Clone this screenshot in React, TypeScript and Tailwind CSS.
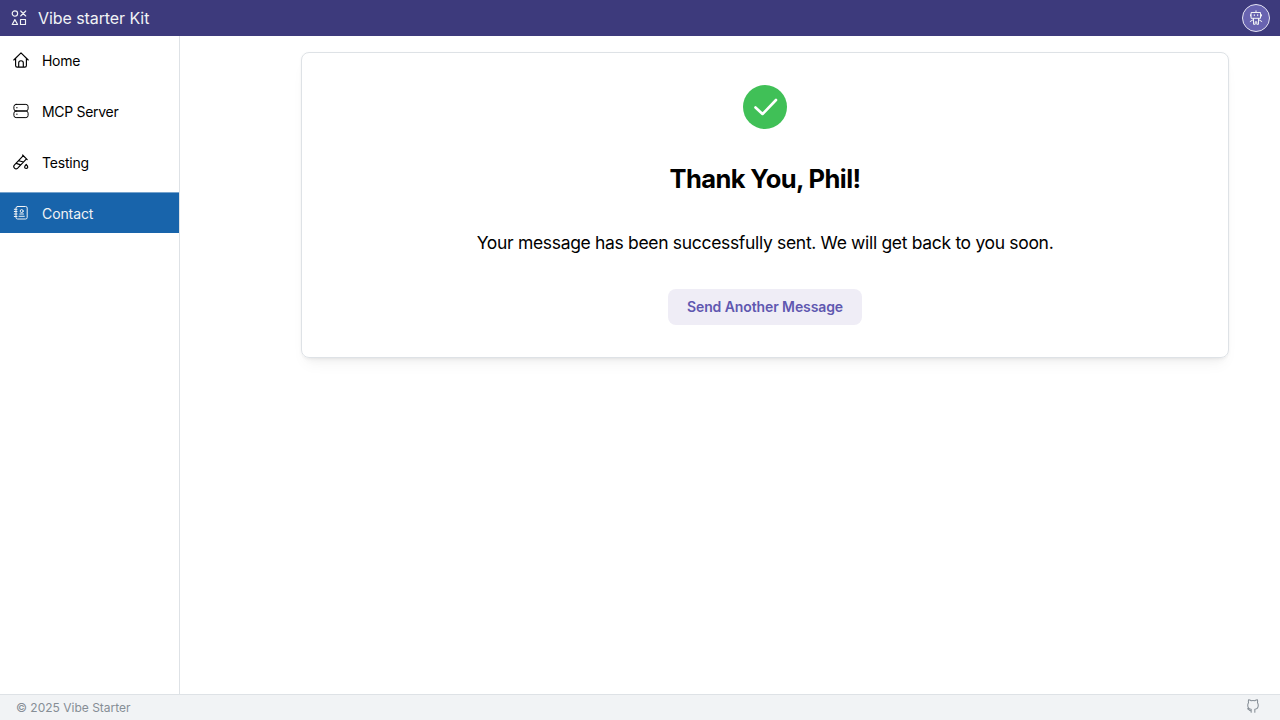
import type { ReactNode } from "react";

function Icon({ children, className = "size-4" }: { children: ReactNode; className?: string }) {
  return (
    <svg
      viewBox="0 0 16 16"
      className={className}
      fill="none"
      stroke="currentColor"
      strokeWidth="1"
      strokeLinecap="round"
      strokeLinejoin="round"
      aria-hidden="true"
    >
      {children}
    </svg>
  );
}

const ShapesIcon = () => (
  <Icon>
    <g strokeWidth="1.15">
      <circle cx="3.9" cy="3.5" r="2.7" />
      <path d="M9.700 1l5 5M14.700 1l-5 5M3.900 9.600L1.200 14.500h5.400zM9.500 9.500h5v5h-5z" />
    </g>
  </Icon>
);

const HomeIcon = () => (
  <Icon>
    <path
      d="M0.800 8L8 0.900 15.200 8M2.600 6.400v7.100c0 .9.7 1.600 1.600 1.600h7.600c.9 0 1.600-.7 1.600-1.600V6.400M5.700 15v-4.200C5.700 8 10.300 8 10.300 10.800V15"
      strokeWidth="1.15"
    />
  </Icon>
);

const ServerIcon = () => (
  <Icon>
    <rect x="0.900" y="1.400" width="14.200" height="6.600" rx="2.200" />
    <rect x="0.900" y="8" width="14.200" height="6.600" rx="2.200" />
    <path d="M3.900 4.400v.5M3.900 11v.5" />
  </Icon>
);

const TestTubeIcon = () => (
  <Icon>
    <path
      d="M9.600 1l4.600 4.600M10.300 1.700L1.500 10.900c-2.100 2.300 1 5.400 3.200 3.200L13.500 4.900M5.800 6.800l4.700 1.200M3.300 9.400l4.300 1.500"
      strokeWidth="1.15"
    />
    <path d="M13.200 10.400c-2.200 2.400-2 4 0 4s2.200-1.600 0-4z" strokeWidth="1.15" />
  </Icon>
);

const ContactIcon = () => (
  <Icon>
    <rect x="3" y="1.500" width="11.200" height="12.500" rx="1.600" />
    <path d="M1.300 4.300h2.700M1.300 6.500h2.700M1.300 9h2.700M1.300 11.500h2.700M6 11.300h5.300M6.800 9h3.700" />
    <circle cx="8.700" cy="6.100" r="1.500" />
  </Icon>
);

const RobotIcon = () => (
  <Icon>
    <path d="M8 2.500V0.800M3.500 2.500h9v5.800h-9zM6.300 4.700v1M9.700 4.700v1M2.500 4.700v1.300M13.500 4.700v1.300M5.500 8.500v5.800h1.700v-2.500h1.600v2.500h1.700V8.500M5 9.800l-2.800 1.700M11 9.800l2.800 1.700" />
  </Icon>
);

const GithubIcon = () => (
  <Icon className="size-3.5">
    <path d="M5.900 15.200v-3.400C3.500 11.500 2 10.100 2 7.200c0-1.200.3-2.100.9-2.900-.4-1.300-.2-2.500.1-3.500 1.400.1 2.300.7 3.100 1.200 1.300-.3 2.500-.3 3.800 0 .8-.5 1.700-1.100 3.100-1.200.3 1 .5 2.200.1 3.500.6.8.9 1.700.9 2.900 0 2.900-1.500 4.300-3.900 4.600v3.400M5.900 13.300c-2.200.5-2.600-1.800-4.200-2.200" strokeWidth="1.2" />
  </Icon>
);

const navItems = [
  { label: "Home", icon: <HomeIcon />, active: false, tracking: "tracking-[-0.3px]" },
  { label: "MCP Server", icon: <ServerIcon />, active: false, tracking: "tracking-[-0.3px]" },
  { label: "Testing", icon: <TestTubeIcon />, active: false, tracking: "tracking-[-0.2px]" },
  { label: "Contact", icon: <ContactIcon />, active: true, tracking: "tracking-[-0.1px]" },
];

export default function App() {
  return (
    <div className="flex h-screen flex-col overflow-hidden bg-white font-['Inter',sans-serif] text-black">
      <header className="flex h-9 shrink-0 items-center justify-between bg-[#3d3a7c] pr-2.5 pl-[11px] text-[#f1f3f5]">
        <div className="flex items-center gap-[11px]">
          <ShapesIcon />
          <span className="text-base leading-6 tracking-[-0.08px]">Vibe starter Kit</span>
        </div>
        <button
          aria-label="Account"
          className="flex size-7 items-center justify-center rounded-full border border-[#e5e4f2] bg-[#6863b0] text-[#f1f3f5]"
        >
          <RobotIcon />
        </button>
      </header>

      <div className="flex min-h-0 flex-1">
        <nav className="flex w-[180px] shrink-0 flex-col gap-2.5 border-r border-[#dee2e6] pt-[3px]">
          {navItems.map((item) => (
            <a
              key={item.label}
              href="#"
              className={`flex h-[41px] shrink-0 items-center gap-[13px] pt-0.5 pl-[13px] text-sm leading-5 ${
                item.active ? "border-t border-[#76a3cd] bg-[#1864ab] text-[#f1f3f5]" : ""
              }`}
            >
              <span className="pb-0.5">{item.icon}</span>
              <span className={item.tracking}>{item.label}</span>
            </a>
          ))}
        </nav>

        <main className="flex-1 pt-4 pr-[51px] pl-[121px]">
          <section className="flex h-[306px] flex-col items-center rounded-lg border border-[#dee2e6] pt-8 shadow-[0_1px_3px_rgba(0,0,0,0.05),0_10px_15px_-5px_rgba(0,0,0,0.05),0_7px_7px_-5px_rgba(0,0,0,0.04)]">
            <div className="flex size-11 items-center justify-center rounded-full bg-[#40c057]">
              <svg
                viewBox="0 0 26 26"
                className="size-[26px]"
                fill="none"
                stroke="white"
                strokeWidth="2.6"
                strokeLinecap="round"
                strokeLinejoin="round"
                aria-hidden="true"
              >
                <path d="M3.500 13.500l7 6.500L24 6" />
              </svg>
            </div>
            <h1 className="mt-8 text-[25.5px] leading-[35px] font-bold tracking-[-0.58px]">Thank You, Phil!</h1>
            <p className="mt-8 text-[17.5px] leading-[29px] tracking-[-0.322px]">
              Your message has been successfully sent. We will get back to you soon.
            </p>
            <button className="mt-8 h-9 w-[194px] rounded-lg bg-[#efedf6] text-sm font-semibold tracking-[-0.1px] text-[#5f58b0]">
              Send Another Message
            </button>
          </section>
        </main>
      </div>

      <footer className="flex h-[26px] shrink-0 items-center justify-between border-t border-[#dee2e6] bg-[#f1f3f5] pr-5 pl-4 text-[#868e96]">
        <span className="text-xs leading-4">© 2025 Vibe Starter</span>
        <a href="#" aria-label="GitHub" className="pb-[3px]">
          <GithubIcon />
        </a>
      </footer>
    </div>
  );
}
